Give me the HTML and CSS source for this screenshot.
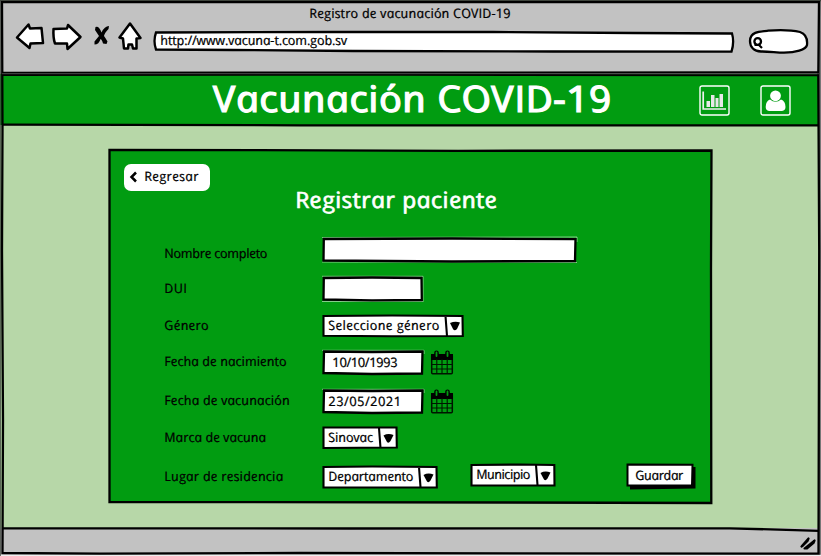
FILE: index.html
```html
<!DOCTYPE html>
<html lang="es">
<head>
<meta charset="utf-8">
<title>Registro de vacunación COVID-19</title>
<link rel="stylesheet" href="styles.css">
</head>
<body>
<div class="window">
  <header class="chrome">
    <div class="window-title"><span class="t t-window">Registro de vacunación COVID-19</span></div>
    <div class="toolbar">
      <svg class="nav" width="130" height="32" viewBox="0 0 130 32">
        <g fill="#fff" stroke="#000" stroke-width="2.500" stroke-linejoin="round">
          <path d="M4 15.500L15.500 2.500L17 6.500L28.500 6L30 21L17.500 21.500L16.500 26Z"/>
          <path d="M40.500 7L54 6.500L55 3L67.500 15L54.500 27L54 21.500L42 21.500Q40 16 40.500 7Z"/>
          <path d="M117 1.500L106.500 15.500L110 16.500L111 26.500H115L115.500 22.500H119L120 26.500H123.500V16.500L127.500 16Z"/>
        </g>
        <path d="M82.500 5Q86 3.500 88.500 10.500Q91.500 4 96 4L95.500 7Q91.500 11 91 14Q92.500 16 94.500 19.500L93.500 22L90 21.500Q89 17.500 87.500 17Q86 22.500 81.500 22.500L81.500 19.500L86 14L82 8Z"/>
      </svg>
      <div class="address">
        <svg class="ink" width="582" height="23" viewBox="0 0 582 23"><path d="M3 2.500L180 2L340 2L480 3L579 3.500Q581.500 12 578.500 21.700L400 21.500L200 21L80 20L3 19.500Q0 11 3 2.500Z" fill="#fff" stroke="#000" stroke-width="2.300"/></svg>
        <span class="t t-url">http://www.vacuna-t.com.gob.sv</span>
      </div>
      <svg class="search" width="62" height="27" viewBox="0 0 62 27">
        <path d="M2 13C2 4 11 3.500 20 2.700C30 2 43 2 52 4C58 6 59.500 12 59 17C58 22 47 24.500 36 24.700C28 24.500 20 23.300 13 23.500C6 23 2 19 2 13Z" fill="#fff" stroke="#000" stroke-width="2.300"/>
        <circle cx="9.700" cy="13.500" r="3.300" fill="none" stroke="#000" stroke-width="2.300"/><path d="M6.500 17H11L14 20" fill="none" stroke="#000" stroke-width="2.200"/>
      </svg>
    </div>
  </header>
  <div class="banner">
    <h1 class="t t-brand">Vacunación COVID-19</h1>
    <svg class="tile tile-chart" width="31" height="31" viewBox="0 0 31 31"><rect x="1" y="1" width="29" height="29" rx="2" fill="none" stroke="#fff" stroke-width="1.400"/><path d="M4.200 6.500V24H27" fill="none" stroke="#eee" stroke-width="1.700"/><path d="M7.500 16h3.500v6H7.500zM12 10h3.500v12H12zM16.500 13h3v9h-3zM20.500 9H24v13h-3.500z" fill="#e8e8e8"/></svg>
    <svg class="tile" width="31" height="31" viewBox="0 0 31 31"><rect x="1" y="1" width="29" height="29" rx="2" fill="none" stroke="#fff" stroke-width="1.400"/><circle cx="15.500" cy="10.800" r="5.400" fill="#fff"/><path d="M10 14.500Q15.500 19 21 14.500Q25.500 16 25.500 22Q25.500 25.500 22 26H9Q5.700 25.500 5.700 22Q5.700 16 10 14.500Z" fill="#fff"/></svg>
  </div>
  <main class="page">
    <section class="card">
      <svg class="ink" width="604" height="356" viewBox="0 0 604 356"><path d="M1.500 1L150 1.200L350 1.800L603.500 1.500L603 120L603.300 354L400 353.500L1.500 353Z" fill="#019c11" stroke="#000" stroke-width="2.300"/></svg>
      <button class="back"><svg width="8" height="12" viewBox="0 0 8 12"><path d="M7 1.500L2.500 6L7 10.500" fill="none" stroke="#000" stroke-width="2.500"/></svg><span class="t t-back">Regresar</span></button>
      <h2 class="t t-heading">Registrar paciente</h2>
      <form class="form">
        <div class="row row-name">
          <label class="label"><span class="t t-name">Nombre completo</span></label>
          <div class="field w-name"><svg class="ink" width="255" height="26" viewBox="0 0 255 26"><path d="M0 .5L255 0V5M0 25L255 25.500" fill="none" stroke="#dfeedd" stroke-width=".6"/><path d="M1.800 2L130 1.500L253.500 2.200L253 24L130 24.500L1.500 23.500Z" fill="#fff" stroke="#000" stroke-width="2.300"/></svg></div>
        </div>
        <div class="row row-dui">
          <label class="label"><span class="t t-dui">DUI</span></label>
          <div class="field w-short"><svg class="ink" width="101" height="26" viewBox="0 0 101 26"><path d="M0 .3H101V26M0 25.500H101" fill="none" stroke="#dfeedd" stroke-width=".6"/><path d="M1.800 2L50 1.500L99.500 2L99.800 24L50 24.300L1.500 23.500Z" fill="#fff" stroke="#000" stroke-width="2.300"/></svg></div>
        </div>
        <div class="row row-gender">
          <label class="label"><span class="t t-gender">Género</span></label>
          <div class="field w-gender"><svg class="ink" width="142" height="24" viewBox="0 0 142 24"><path d="M1.500 2L70 1.500L140.500 2L140.800 22L70 22.300L1.500 21.700ZM123.500 2L125 22" fill="#fff" stroke="#000" stroke-width="2.100"/><path d="M128 9Q133 7 138 8.500L135 15Q132.500 17.500 131 15Z"/></svg><span class="t t-select-gender">Seleccione género</span></div>
        </div>
        <div class="row row-birth">
          <label class="label"><span class="t t-birth">Fecha de nacimiento</span></label>
          <div class="field w-short value-birth"><svg class="ink" width="102" height="26" viewBox="0 0 102 26"><path d="M0 .3H102V4" fill="none" stroke="#dfeedd" stroke-width=".6"/><path d="M2 1.500L50 2L100.500 1.500L100 23.500L50 24L1.500 23Z" fill="#fff" stroke="#000" stroke-width="2.300"/></svg><span class="t t-date1">10/10/1993</span></div>
          <svg class="calendar" width="24" height="25" viewBox="0 0 24 25"><rect x="1.700" y="4.700" width="20.600" height="19" rx="1" fill="none" stroke="#001500" stroke-width="1.500"/><path d="M1 4h22v6H1z"/><path d="M6.800 9V24M12 9V24M17.200 9V24M2 14.500H22M2 19H22" stroke="#001500" stroke-width="1.100"/><path d="M6.500 2.700V6M17.500 2.700V6" stroke="#000" stroke-width="4.600" stroke-linecap="round"/><path d="M6.500 2.500V6M17.500 2.500V6" stroke="#019c11" stroke-width="1.800" stroke-linecap="round"/></svg>
        </div>
        <div class="row row-shot">
          <label class="label"><span class="t t-shot">Fecha de vacunación</span></label>
          <div class="field w-short"><svg class="ink" width="102" height="26" viewBox="0 0 102 26"><path d="M0 .3H102V4" fill="none" stroke="#dfeedd" stroke-width=".6"/><path d="M2 1.500L50 2L100.500 1.500L100 23.500L50 24L1.500 23Z" fill="#fff" stroke="#000" stroke-width="2.300"/></svg><span class="t t-date2">23/05/2021</span></div>
          <svg class="calendar" width="24" height="25" viewBox="0 0 24 25"><rect x="1.700" y="4.700" width="20.600" height="19" rx="1" fill="none" stroke="#001500" stroke-width="1.500"/><path d="M1 4h22v6H1z"/><path d="M6.800 9V24M12 9V24M17.200 9V24M2 14.500H22M2 19H22" stroke="#001500" stroke-width="1.100"/><path d="M6.500 2.700V6M17.500 2.700V6" stroke="#000" stroke-width="4.600" stroke-linecap="round"/><path d="M6.500 2.500V6M17.500 2.500V6" stroke="#019c11" stroke-width="1.800" stroke-linecap="round"/></svg>
        </div>
        <div class="row row-brand">
          <label class="label"><span class="t t-marca">Marca de vacuna</span></label>
          <div class="field w-sinovac"><svg class="ink" width="76" height="24" viewBox="0 0 76 24"><path d="M1.500 1.500L74.500 1.500L74.800 21.500L1.500 22ZM57 2L58.500 22" fill="#fff" stroke="#000" stroke-width="2.100"/><path d="M61.500 9.500Q66 7 71.500 9L68.500 15Q66.500 18 65 16Z"/></svg><span class="t t-sinovac">Sinovac</span></div>
        </div>
        <div class="row row-place">
          <label class="label"><span class="t t-place">Lugar de residencia</span></label>
          <div class="field w-dep"><svg class="ink" width="116" height="24" viewBox="0 0 116 24"><path d="M1.500 2L50 1.500L114.500 2L114.800 22.500L1.500 22.500ZM97 2L98.500 22" fill="#fff" stroke="#000" stroke-width="2.100"/><path d="M101.500 10Q106 7.500 111.500 9.500L108.500 15.500Q106.500 18.500 105 16.500Z"/></svg><span class="t t-dep">Departamento</span></div>
          <div class="field w-mun"><svg class="ink" width="86" height="24" viewBox="0 0 86 24"><path d="M1.500 2L50 1.500L84.300 2L84.500 22.500L1.500 22.500ZM66 2L67.500 22" fill="#fff" stroke="#000" stroke-width="2.100"/><path d="M70.500 10Q75 7.500 80.500 9.500L77.500 15.500Q75.500 18.500 74 16.500Z"/></svg><span class="t t-mun">Municipio</span></div>
          <button type="button" class="save"><svg class="ink" width="72" height="28" viewBox="0 0 72 28"><path d="M4 4H69.500V25.500L4 26.500Z"/><path d="M1.500 1.500L66.500 1.800L66 22.500L1.500 22.500Z" fill="#fff" stroke="#000" stroke-width="2"/></svg><span class="t t-save">Guardar</span></button>
        </div>
      </form>
    </section>
  </main>
  <footer class="status"><svg width="18" height="14" viewBox="0 0 18 14"><path d="M2.500 9.500L9.500 1.500L8.500 4L4 8.500ZM5.500 11.500L15.500 3.500L14.500 6L8 11.500Z" stroke="#000" stroke-width="2.200" stroke-linejoin="round"/></svg></footer>
  <svg class="frame" width="821" height="556" viewBox="0 0 821 556" fill="none" stroke="#000">
    <path d="M820 0V556" stroke="#777" stroke-width="2"/>
    <path d="M0 555.300H821" stroke="#eee" stroke-width="1.200"/>
    <path d="M0 0V556M0 .5H821" stroke="#3e443c" stroke-width="1.500"/>
    <path d="M2 2.200H819L818.300 76L819.200 250L818.500 553.700L300 553L100 553.700L2.500 553L3 420L2 250L2.500 130Z" stroke-width="2.300"/>
    <path d="M2 72.700L400 72.500L819 72.200M2 75L400 74.800L819 75.200" stroke-width="2"/>
    <path d="M2 73.700H819" stroke="#444" stroke-width="1"/>
    <path d="M2 124.700L300 125.300L819 125.300" stroke-width="2.200"/>
    <path d="M2 528.300L350 528.500L730 528.300L819 530.800" stroke-width="2.300"/>
  </svg>
</div>
</body>
</html>
```

FILE: styles.css
```css
* { box-sizing: border-box; }

body {
  margin: 0;
  font-family: "Open Sans", sans-serif;
  font-size: 13px;
  color: #000;
}

.window {
  position: relative;
  width: 821px;
  height: 556px;
  overflow: hidden;
  display: flex;
  flex-direction: column;
  background: #b7d7a8;
}

/* Rounded single-storey lettering: upright-corrected italic */
.t {
  display: inline-block;
  font-style: italic;
  font-weight: 400;
  line-height: 18px;
  white-space: nowrap;
  transform-origin: 0 50%;
  transform: translateY(-1px) scaleX(1.04) skewX(12deg);
  -webkit-text-stroke: 0.2px currentColor;
}

.ink { position: absolute; left: 0; top: 0; overflow: visible; }
.ink + .t { z-index: 1; }
.frame { position: absolute; left: 0; top: 0; pointer-events: none; }

.chrome { height: 74px; background: #c2c2c2; }
.window-title { height: 22px; padding: 5px 0 0 309px; }
.toolbar { display: flex; align-items: flex-start; padding-left: 13px; }
.address { position: relative; width: 582px; height: 23px; margin: 8px 0 0 10px; padding: 2px 0 0 7px; }
.search { margin: 6px 0 0 13px; }

.banner { height: 51px; display: flex; align-items: flex-start; padding: 10px 0 0 212px; background: #019c11; }
.banner h1 { margin: 0; width: 400px; font-size: 36.5px; line-height: 30px; letter-spacing: 0.3px; transform: translateY(-1px) scaleX(1.12) skewX(12deg); -webkit-text-stroke-width: 1.1px; color: #fff; }
.tile { margin-top: 1px; }
.tile-chart { margin-left: 87px; margin-right: 30px; }

.page { height: 403px; padding: 24px 0 0 108px; }
.card { position: relative; width: 604px; height: 356px; padding: 15px 0 0 16px; }
.back, .save { border: 0; font: inherit; background: none; color: inherit; }
.back { position: relative; display: flex; align-items: center; gap: 7px; width: 86px; height: 27px; padding: 0 0 2px 5px; border-radius: 7px; background: #fff; }
.card h2 { position: relative; margin: 0 0 0 171px; height: 26px; font-size: 22.5px; line-height: 22px; letter-spacing: 0.25px; transform: translateY(-2px) scaleX(1.1) skewX(12deg); -webkit-text-stroke-width: 0.6px; color: #fff; display: block; width: 206px; }

.form { position: relative; padding: 20px 0 0 39px; }
.row { display: flex; align-items: flex-start; }
.row-name { height: 39px; }
.row-dui { height: 38px; }
.row-gender { height: 36px; }
.row-birth { height: 39px; }
.row-shot { height: 37px; }
.row-brand { height: 39px; }
.label { width: 159px; padding: 3px 0 0 1px; }
.row-name .label { padding-top: 8px; }
.row-dui .label { padding-top: 4px; }
.row-birth .label { padding-top: 3px; }
.field { position: relative; height: 25px; padding: 3px 0 0 6px; }
.w-name { width: 255px; }
.w-short { width: 102px; padding-top: 4px; }
.value-birth { padding-left: 10px; }
.w-gender { width: 142px; }
.w-sinovac { width: 76px; }
.w-dep { width: 116px; }
.w-mun { width: 86px; margin: -2px 0 0 32px; }
.calendar { margin-left: 6px; }
.save { position: relative; display: flex; align-items: flex-start; width: 72px; height: 28px; margin: -2px 0 0 70px; padding: 4px 0 0 9px; text-align: left; }

.t-window { letter-spacing: 0.1px; }
.t-url { letter-spacing: -0.17px; }
.t-back { letter-spacing: 0.25px; }
.t-name { letter-spacing: -0.33px; }
.t-dui { letter-spacing: 0.3px; }
.t-gender { letter-spacing: 0.17px; }
.t-birth { letter-spacing: -0.05px; }
.t-shot { letter-spacing: 0.05px; }
.t-marca { letter-spacing: -0.07px; }
.t-place { letter-spacing: 0.12px; }
.t-select-gender { letter-spacing: 0.29px; }
.t-date1 { letter-spacing: -0.4px; }
.t-date2 { letter-spacing: 0.4px; }
.t-sinovac { letter-spacing: -0.14px; }
.t-dep { letter-spacing: -0.17px; }
.t-mun { letter-spacing: -0.56px; }
.t-save { letter-spacing: -0.43px; }

.status { height: 28px; display: flex; align-items: flex-start; justify-content: flex-end; padding: 9px 4px 0 0; background: #c2c2c2; }
```
